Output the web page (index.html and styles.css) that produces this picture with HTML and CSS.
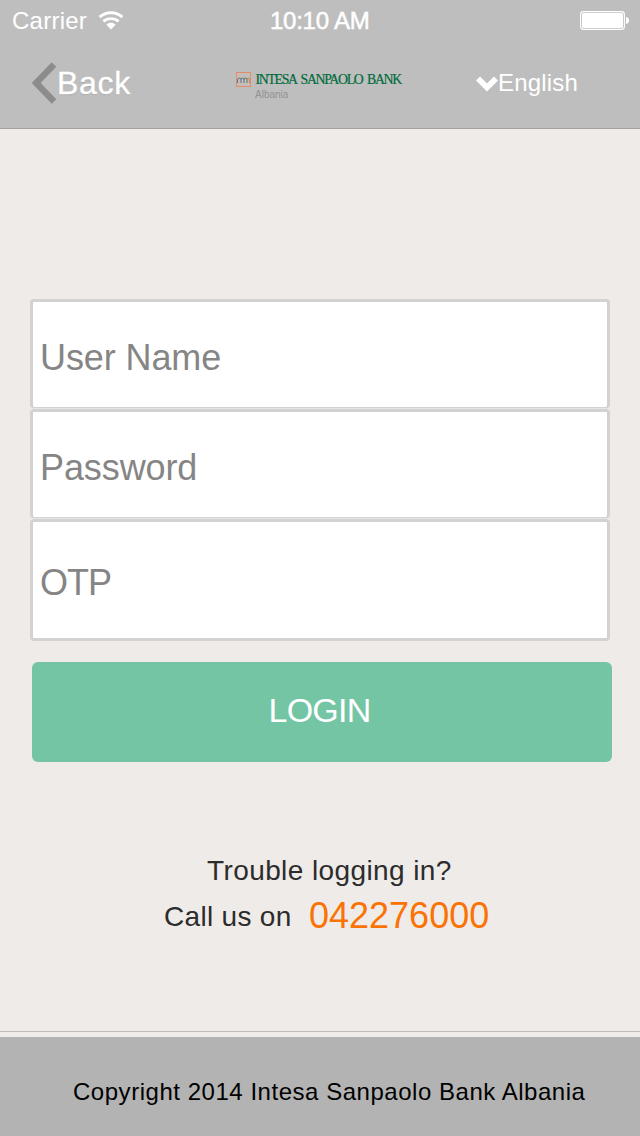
FILE: index.html
```html
<!DOCTYPE html>
<html lang="en">
<head>
<meta charset="utf-8">
<title>Login</title>
<link rel="stylesheet" href="styles.css">
</head>
<body>
<div class="screen">
  <header class="top">
    <div class="status">
      <div class="network">
        <span class="carrier">Carrier</span>
        <svg class="wifi" width="26" height="19" viewBox="0 0 26 19">
          <path d="M1.600 6.200C8 .4 18 .4 24.400 6.200" fill="none" stroke="#fff" stroke-width="3"/>
          <path d="M5.400 10.400C9.600 6.600 16.400 6.600 20.600 10.400" fill="none" stroke="#fff" stroke-width="2.800"/>
          <path d="M8.400 13.800C11 11.200 15 11.200 17.600 13.800L13 18.400Z" fill="#fff"/>
        </svg>
      </div>
      <span class="clock">10:10 AM</span>
      <svg class="battery" width="50" height="20" viewBox="0 0 50 20">
        <rect x=".6" y=".6" width="43.800" height="17.800" rx="2.800" fill="none" stroke="#fff" stroke-width="1.100"/>
        <rect x="2" y="2" width="41" height="15" rx="1.500" fill="#fff"/>
        <path d="M46 6C50 6.400 50 12.600 46 13Z" fill="#fff"/>
      </svg>
    </div>
    <nav class="bar">
      <div class="back">
        <svg width="25" height="42" viewBox="0 0 25 42">
          <path d="M22 2.500L4.200 21L22 39.500" fill="none" stroke="#8c8c8c" stroke-width="6.400"/>
        </svg>
        <span class="back-label">Back</span>
      </div>
      <svg class="logo" width="180" height="32" viewBox="0 0 180 32">
        <rect x="1.500" y="2.500" width="14" height="14" fill="#c4bdb8" stroke="#e28d68" stroke-width="1"/>
        <path d="M2.500 13V9.500Q4.500 6.500 6 9.500V13M6 9.500Q7.500 6.500 9 9.500V13" fill="none" stroke="#68798d" stroke-width="1.100"/>
        <path d="M9 9.500Q10.500 6.500 12 9.500V13" fill="none" stroke="#4f8a69" stroke-width="1.100"/>
        <path d="M12 9.500Q13.300 6.500 14.500 9.500V13" fill="none" stroke="#d58461" stroke-width="1.100"/>
        <text class="brand" x="20.500" y="14">INTESA SANPAOLO BANK</text>
        <text class="country" x="20" y="27.500">Albania</text>
      </svg>
      <div class="language">
        <svg width="22" height="18" viewBox="0 0 22 18">
          <path d="M2 3.500L11 12.500L20 3.500" fill="none" stroke="#fff" stroke-width="5.800"/>
        </svg>
        <span class="language-label">English</span>
      </div>
    </nav>
  </header>
  <main class="content">
    <form class="form">
      <input class="field" type="text" placeholder="User Name">
      <input class="field" type="text" placeholder="Password">
      <input class="field field-otp" type="text" placeholder="OTP">
      <button class="login" type="button">LOGIN</button>
    </form>
    <div class="help">
      <p class="question">Trouble logging in?</p>
      <p class="call"><span class="call-label">Call us on</span><span class="phone">042276000</span></p>
    </div>
  </main>
  <footer class="footer"><span class="copyright">Copyright 2014 Intesa Sanpaolo Bank Albania</span></footer>
</div>
</body>
</html>
```
FILE: styles.css
```css
* { box-sizing: border-box; }
body { margin: 0; background: #efebe8; font-family: "Liberation Sans", Arial, sans-serif; }
p { margin: 0; }
svg { display: block; flex: none; }
.screen { width: 640px; height: 1136px; display: flex; flex-direction: column; overflow: hidden; }
.top { height: 129px; flex: none; background: #bebebe; border-bottom: 1px solid #a6a19e; color: #fff; }
.status { height: 40px; display: grid; grid-template-columns: 270px 1fr 60px; align-items: start; padding-top: 7px; line-height: 28px; font-size: 24px; white-space: nowrap; }
.network { display: flex; padding-left: 12px; }
.carrier { width: 86px; letter-spacing: .25px; }
.wifi { margin-top: 4px; }
.clock { letter-spacing: -.25px; -webkit-text-stroke: .5px #fff; }
.battery { margin-top: 4px; }
.bar { height: 88px; display: grid; grid-template-columns: 235px 240px 1fr; padding-top: 22px; white-space: nowrap; }
.back { display: flex; padding-left: 32px; }
.back-label { font-size: 32px; line-height: 42px; letter-spacing: .7px; -webkit-text-stroke: .4px #fff; text-shadow: 0 1px 1px #a4a4a4; }
.logo { margin-top: 8px; }
.brand { font: 13.800px "Liberation Serif", serif; letter-spacing: -1.3px; word-spacing: 2.4px; fill: #006b3b; stroke: #006b3b; stroke-width: .2px; }
.country { font: 10px "Liberation Sans", sans-serif; fill: #929292; }
.language { display: flex; }
.language svg { margin: 13px 0 0 1px; }
.language-label { font-size: 24px; line-height: 42px; letter-spacing: .2px; }
.content { flex: 1; padding-top: 170px; border-bottom: 1px solid #bdbdbd; }
.form { display: flex; flex-direction: column; padding-left: 30px; }
.field { width: 580px; height: 109px; margin: 0 0 1px; padding: 6px 7px 0; background: #fff; border: 3px solid #d2d2d2; border-bottom-width: 1px; border-radius: 4px; box-shadow: 0 1px 0 #e6e6e6; outline: 0; font: 36px "Liberation Sans", sans-serif; letter-spacing: -.1px; }
.field::placeholder { color: #858585; opacity: 1; }
.field-otp { height: 122px; margin: 0; padding-top: 6px; border-bottom-width: 3px; box-shadow: none; letter-spacing: -1px; }
.login { width: 580px; height: 100px; margin: 21px 0 0 2px; padding: 0 5px 4px 0; border: 0; border-radius: 6px; background: #74c5a4; color: #fff; font: 34px "Liberation Sans", sans-serif; letter-spacing: -.8px; }
.help { padding-top: 91px; color: #2c2c2c; font-size: 28px; white-space: nowrap; }
.question { padding-left: 207px; line-height: 36px; letter-spacing: .4px; }
.call { display: flex; align-items: flex-start; padding-left: 164px; margin-top: 5px; line-height: 44px; }
.call-label { width: 145px; line-height: 45px; letter-spacing: .3px; }
.phone { color: #f97305; font-size: 36px; }
.footer { height: 99px; flex: none; margin-top: 5px; background: #b3b3b3; padding: 40px 0 0 73px; }
.copyright { font-size: 24px; line-height: 30px; letter-spacing: .53px; white-space: nowrap; color: #000; }
```
